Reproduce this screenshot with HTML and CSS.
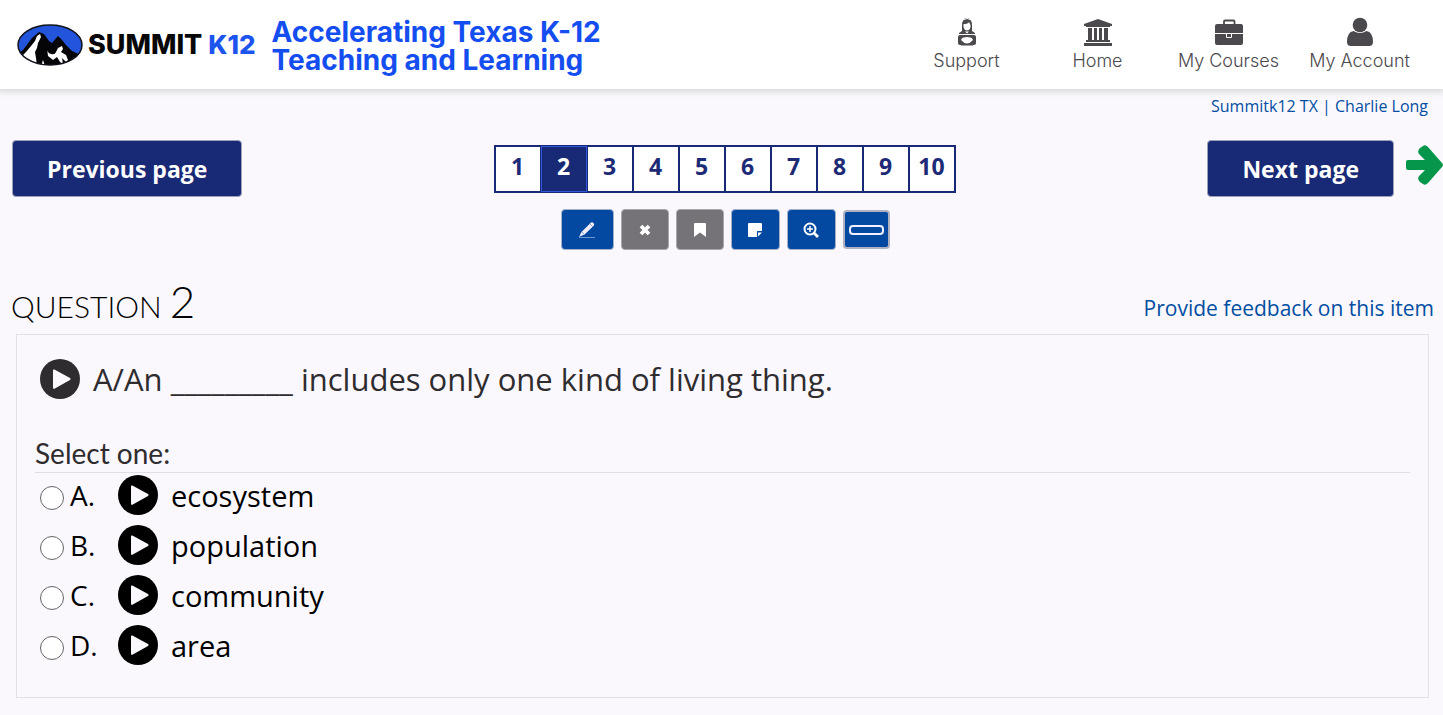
FILE: index.html
```html
<!DOCTYPE html>
<html lang="en">
<head>
<meta charset="utf-8">
<meta name="viewport" content="width=device-width, initial-scale=1">
<title>Summit K12 - Question 2</title>
<link rel="stylesheet" href="styles.css">
</head>
<body>
<svg class="defs" aria-hidden="true">
  <symbol id="play" viewBox="0 0 40 40"><circle cx="20" cy="20" r="20" fill="currentColor"/><path d="M14.400 10.500 L30 19 Q31.400 20 30 21 L14.400 29.800 Q13 30.200 13 28.500 V11.700 Q13 10 14.400 10.500Z" fill="#faf8fc"/></symbol>
</svg>

<header class="header">
  <a class="brand" href="#" aria-label="Summit K12">
    <svg class="brand-mark" viewBox="0 0 66 42" aria-hidden="true">
      <defs><clipPath id="oval"><ellipse cx="33" cy="21" rx="32" ry="20"/></clipPath></defs>
      <ellipse cx="33" cy="21" rx="32" ry="20" fill="#2255dc"/>
      <g clip-path="url(#oval)">
        <path d="M0 42V30L6 26 15 14 22 8 27 10 32 17 35 19 41 12 45 16 49 21 55 27 66 32V42Z" fill="#050507"/>
        <path d="M4 33 L9 28 14 22 18 17 20 12 23 10 24 13 21 19 20 24 18 28 19 34 20 42H8Z" fill="#fff"/>
        <path d="M30 24 Q30 29 34 30 Q38 31 39 28 L41 24 45 22 46 25 44 28 49 31 51 36 49 38 45 34 46 40 43 38 40 33 36 36 31 32Z" fill="#fff"/>
        <path d="M24 42 26 36 28 42Z" fill="#fff"/>
      </g>
      <ellipse cx="33" cy="21" rx="32" ry="20" fill="none" stroke="#11131b" stroke-width="1.500"/>
    </svg>
    <span class="brand-name">SUMMIT <span class="brand-k">K12</span></span>
  </a>
  <p class="tagline">Accelerating Texas K-12<br>Teaching and Learning</p>
  <nav class="nav" aria-label="Main">
    <a class="nav-item" href="#">
      <svg class="nav-icon" viewBox="0 0 30 30" aria-hidden="true">
        <path d="M10 9 Q10 1 15 1 Q20 1 20 9 L20 14 23 16 23 17H7V16L10 14Z" fill="currentColor"/>
        <path d="M11.500 7 Q16 7 17 5 L18.500 8 Q19 13 15 13.500 Q11 13 11.500 7Z" fill="#fff"/>
        <path d="M10.500 3 Q15 0 19.500 3" stroke="#fff" fill="none"/>
        <path d="M13 14.500H17L15 16.500Z" fill="#fff"/>
        <rect x="6" y="18" width="18" height="10" rx="2" fill="currentColor"/>
        <path d="M9 23 Q10 20 12 20.500 L15 20 18 20.500 Q20 20 21 23 Q18 26.500 15 26.500 Q12 26.500 9 23Z" fill="#fff"/>
        <path d="M9 28.500H21" stroke="currentColor" opacity=".5"/>
      </svg>
      <span>Support</span>
    </a>
    <a class="nav-item" href="#">
      <svg class="nav-icon" viewBox="0 0 30 30" aria-hidden="true" fill="currentColor">
        <path d="M15 2 29 7V9H27V10H3V9H1V7Z M5 11H9V23H5Z M11 11H14V23H11Z M16 11H19V23H16Z M21 11H25V23H21Z M3 23H27V25H3Z M1 26H29V29H1Z"/>
      </svg>
      <span>Home</span>
    </a>
    <a class="nav-item" href="#">
      <svg class="nav-icon" viewBox="0 0 30 30" aria-hidden="true">
        <path d="M10 8V4.500Q10 3.500 11 3.500H19.500Q20.500 3.500 20.500 4.500V8" fill="none" stroke="currentColor" stroke-width="1.800"/>
        <path d="M3 7H27Q29 7 29 9V16H1V9Q1 7 3 7Z M1 17H29V26Q29 28 27 28H3Q1 28 1 26Z" fill="currentColor"/>
        <path d="M12.500 16.500H17.500V20.500H12.500Z" fill="#4b494d" stroke="#fff"/>
      </svg>
      <span>My Courses</span>
    </a>
    <a class="nav-item" href="#">
      <svg class="nav-icon" viewBox="0 0 30 30" aria-hidden="true" fill="currentColor">
        <circle cx="15" cy="8" r="7.300"/>
        <path d="M8.500 14 Q15 18 21.500 14 Q28 15 28 25 Q28 29 24 29H6Q2 29 2 25 Q2 15 8.500 14Z"/>
      </svg>
      <span>My Account</span>
    </a>
  </nav>
</header>

<main>
  <a class="user" href="#">Summitk12 TX | Charlie Long</a>

  <div class="pagebar">
    <button class="page-btn prev" type="button">Previous page</button>
    <nav class="pager" aria-label="Questions">
      <a href="#">1</a><a class="current" href="#" aria-current="page">2</a><a href="#">3</a><a href="#">4</a><a href="#">5</a><a href="#">6</a><a href="#">7</a><a href="#">8</a><a href="#">9</a><a href="#">10</a>
    </nav>
    <div class="next">
      <button class="page-btn" type="button">Next page</button>
      <svg class="arrow" viewBox="0 0 37 42" aria-hidden="true"><path d="M2 16H19L13 10Q11 7 14 4L17 2Q19 0 22 3L36 19Q38 21 36 23L22 39Q19 42 17 40L14 38Q11 35 13 32L19 26H2Q0 26 0 24V18Q0 16 2 16Z" fill="#06964b"/></svg>
    </div>
  </div>

  <div class="tools">
    <button class="tool pen" type="button" aria-label="Highlighter">
      <svg viewBox="0 0 18 18" aria-hidden="true"><path d="M1 16 3.500 11 12.500 2 Q14 .5 15.500 2 Q17 3.500 15.500 5 L6.500 13.500 3 15Z" fill="#f4effa"/><path d="M12 3 15 6 M4 11 6.500 13.500" stroke="#8aa6d4"/><path d="M1 16.500H17" stroke="#6c96d0"/></svg>
    </button>
    <button class="tool muted" type="button" aria-label="Clear">
      <svg viewBox="0 0 18 18" aria-hidden="true"><path d="M5 5 13 13 M13 5 5 13" stroke="#fff" stroke-width="3.800"/></svg>
    </button>
    <button class="tool muted" type="button" aria-label="Bookmark">
      <svg viewBox="0 0 18 18" aria-hidden="true"><path d="M4 2H14Q15 2 15 3V16L9 11.500 3 16V3Q3 2 4 2Z" fill="#fff"/></svg>
    </button>
    <button class="tool" type="button" aria-label="Note">
      <svg viewBox="0 0 18 18" aria-hidden="true"><path d="M3 2H15Q16 2 16 3V10H11.500Q11 10 11 10.500V16H3Q2 16 2 15V3Q2 2 3 2Z M12 11.500H16L12 15.500Z" fill="#fff"/></svg>
    </button>
    <button class="tool" type="button" aria-label="Zoom in">
      <svg viewBox="0 0 18 18" aria-hidden="true"><circle cx="8" cy="8" r="5.500" fill="none" stroke="#fff" stroke-width="2"/><path d="M5 8H11 M8 5V11" stroke="#fff" stroke-width="1.500"/><path d="M12 12 16 16" stroke="#fff" stroke-width="2.800"/></svg>
    </button>
    <button class="tool reader" type="button" aria-label="Line reader"><span class="line"></span></button>
  </div>

  <div class="question-head">
    <h1 class="title">QUESTION <span class="title-num">2</span></h1>
    <a class="feedback" href="#">Provide feedback on this item</a>
  </div>

  <section class="card">
    <div class="prompt">
      <button class="play" type="button" aria-label="Play question"><svg viewBox="0 0 40 40"><use href="#play"/></svg></button>
      <p>A/An _________ includes only one kind of living thing.</p>
    </div>
    <fieldset class="choices">
      <legend>Select one:</legend>
      <div class="choice"><input type="radio" name="answer" id="a"><label class="letter" for="a">A.</label><button class="play" type="button" aria-label="Play A"><svg viewBox="0 0 40 40"><use href="#play"/></svg></button><label for="a">ecosystem</label></div>
      <div class="choice"><input type="radio" name="answer" id="b"><label class="letter" for="b">B.</label><button class="play" type="button" aria-label="Play B"><svg viewBox="0 0 40 40"><use href="#play"/></svg></button><label for="b">population</label></div>
      <div class="choice"><input type="radio" name="answer" id="c"><label class="letter" for="c">C.</label><button class="play" type="button" aria-label="Play C"><svg viewBox="0 0 40 40"><use href="#play"/></svg></button><label for="c">community</label></div>
      <div class="choice"><input type="radio" name="answer" id="d"><label class="letter" for="d">D.</label><button class="play" type="button" aria-label="Play D"><svg viewBox="0 0 40 40"><use href="#play"/></svg></button><label for="d">area</label></div>
    </fieldset>
  </section>
</main>
</body>
</html>
```
FILE: styles.css
```css
* { box-sizing: border-box; }

body {
  margin: 0;
  background: #faf8fc;
  color: #000;
  font-family: "Open Sans", "Noto Sans", sans-serif;
}

p, h1 { margin: 0; }
a { color: #034ea2; text-decoration: none; }
button { font-family: inherit; cursor: pointer; }
.defs { display: none; }

/* Header */
.header {
  display: flex;
  align-items: center;
  height: 89px;
  padding: 0 18px 0 17px;
  background: #fff;
  box-shadow: 0 1px 6px 2px #d9d8dc;
}
.brand { display: flex; align-items: center; gap: 5px; }
.brand-mark { width: 66px; height: 42px; }
.brand-name {
  color: #08080a;
  font: 800 27px/32px Inter, sans-serif;
  white-space: nowrap;
}
.brand-k { color: #1c54ee; font-size: 26px; }
.tagline {
  margin-left: 16px;
  padding-top: 2px;
  color: #144df0;
  font: 700 28px/28px Inter, sans-serif;
  white-space: nowrap;
}
.nav {
  display: grid;
  grid-template-columns: repeat(4, 131px);
  margin-left: auto;
  padding-top: 2px;
}
.nav-item {
  display: flex;
  flex-direction: column;
  align-items: center;
  color: #4b494d;
  font: 300 18px/28px Inter, sans-serif;
}
.nav-icon { width: 30px; height: 30px; }

/* Page navigation */
.user {
  display: block;
  padding: 6px 15px 0 0;
  font-size: 16px;
  line-height: 22px;
  text-align: right;
}
.pagebar {
  display: grid;
  grid-template-columns: 1fr auto 1fr;
  align-items: center;
  padding: 23px 0 0 6px;
}
.page-btn {
  height: 57px;
  padding: 0 34px;
  border: 1px solid #9ba0b8;
  border-radius: 4px;
  background: #182975;
  color: #fff;
  font-size: 23px;
  font-weight: 700;
  white-space: nowrap;
}
.prev { justify-self: start; margin-left: 6px; }
.next { display: flex; justify-content: flex-end; align-items: center; gap: 12px; }
.arrow { width: 37px; height: 42px; margin-bottom: 8px; }
.pager { display: flex; border: 1px solid #182975; }
.pager a {
  width: 46px;
  height: 46px;
  border: 1px solid #182975;
  background: #fff;
  color: #1d2a76;
  font-size: 23px;
  font-weight: 700;
  line-height: 38px;
  text-align: center;
}
.pager .current {
  border-color: #3058d8;
  background: #182975;
  color: #fff;
}

/* Tools */
.tools {
  display: flex;
  justify-content: center;
  align-items: center;
  gap: 7px;
  padding: 12px 0 0 7px;
}
.tool {
  display: flex;
  justify-content: center;
  align-items: center;
  width: 49px;
  height: 41px;
  padding: 0;
  border: 1px solid #a3b0c8;
  border-radius: 4px;
  background: #0349a1;
}
.tool svg { width: 18px; height: 18px; }
.pen { width: 53px; }
.muted { width: 48px; border-color: #a9a7ab; background: #757377; }
.reader { width: 47px; height: 39px; border: 2px solid #adb1c2; }
.line {
  width: 35px;
  height: 10px;
  border: 2px solid #eef0ff;
  border-radius: 4px;
}

/* Question */
.question-head {
  display: flex;
  justify-content: space-between;
  align-items: center;
  padding: 25px 9px 0 11px;
}
.title {
  font: 300 30px/52px Lato, sans-serif;
}
.title-num { font-size: 44px; }
.feedback { padding-top: 8px; font-size: 21px; line-height: 28px; }
.card {
  margin: 2px 14px 0 16px;
  padding: 23px 18px 24px;
  border: 1px solid #e3e1e5;
}
.prompt {
  display: flex;
  align-items: center;
  gap: 13px;
  padding-left: 5px;
  color: #2f2c30;
  font-size: 31px;
  line-height: 42px;
}
.play {
  width: 40px;
  height: 40px;
  padding: 0;
  border: 0;
  background: none;
  color: inherit;
}
.play svg { display: block; width: 40px; height: 40px; }
.choices {
  min-width: 0;
  margin: 32px 0 0;
  padding: 0;
  border: 0;
}
.choices legend {
  width: 100%;
  padding: 2px 0 0;
  border-bottom: 1px solid #dfdde1;
  color: #2f2c30;
  font: 400 28px/38px Lato, sans-serif;
}
.choice {
  display: flex;
  align-items: center;
  height: 50px;
  padding: 0 0 6px 5px;
  color: #000;
  font-size: 29px;
}
.choice input {
  appearance: none;
  width: 24px;
  height: 24px;
  margin: 6px 6px 0 0;
  border: 1px solid #656367;
  border-radius: 50%;
  background: #fff;
}
.choice input:checked { border-width: 7px; }
.choice .letter { width: 48px; font-size: 28px; }
.choice .play { margin-right: 13px; }
```
